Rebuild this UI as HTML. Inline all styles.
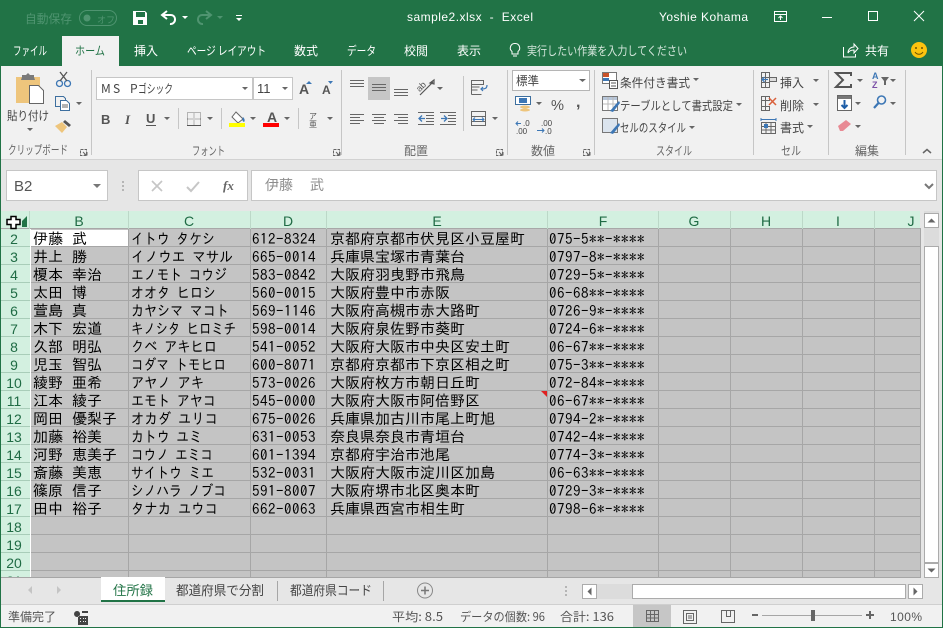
<!DOCTYPE html>
<html lang="ja"><head><meta charset="utf-8"><title>sample2.xlsx - Excel</title>
<style>
html,body{margin:0;padding:0;background:#e6e6e6;width:943px;height:628px;overflow:hidden}
svg{display:block;position:absolute;left:0;top:0}
text{font-family:"Liberation Sans","Noto Sans CJK JP",sans-serif;font-size:12px;white-space:pre}
.w{fill:#fff}.g{fill:#5f5f5f}.d{fill:#444}
.j{font-family:"Noto Sans CJK JP",sans-serif}
.c{font-family:"IPAGothic","Liberation Sans",sans-serif;font-size:15px;fill:#000}
.n{letter-spacing:.5px}
.h{font-family:"Liberation Sans",sans-serif;font-size:14px;fill:#1f6b44;text-anchor:middle}
.r{font-family:"Liberation Sans",sans-serif;font-size:14px;fill:#1f6b44;text-anchor:middle}
.s{fill:none;stroke:#666;stroke-width:1}
</style></head><body>
<svg width="943" height="628" viewBox="0 0 943 628" xmlns="http://www.w3.org/2000/svg">
<!-- backgrounds -->
<rect width="943" height="628" fill="#e6e6e6"/>
<rect width="943" height="66" fill="#217346"/>
<rect x="62" y="36" width="57" height="30" fill="#f1f1f1"/>
<rect y="66" width="943" height="93" fill="#f1f1f1"/>
<rect y="159" width="943" height="1" fill="#d2d2d2"/>
<!-- title bar -->
<text x="25" y="23" class="j" fill="#4f9470" textLength="47" lengthAdjust="spacingAndGlyphs">自動保存</text>
<rect x="79.500" y="10.500" width="37" height="15" rx="7.500" fill="none" stroke="#4f9470"/>
<circle cx="87" cy="18" r="3.500" fill="#4f9470"/>
<text x="97" y="23" class="j" fill="#4f9470" style="font-size:9px">オフ</text>
<path d="M133 11h12l2 2v12h-14z" fill="#fff"/><path d="M136 12h9v5h-9zM138 20h5v4h-5z" fill="#217346"/>
<path d="M167 11l-5 4 5 4M162 15h9a4 4 0 0 1 4 4 4.500 4.500 0 0 1-5 5" fill="none" stroke="#fff" stroke-width="2"/>
<path d="M182 16h6l-3 3z" fill="#fff"/>
<path d="M206 11l5 4-5 4M211 15h-9a4 4 0 0 0-4 4 4.500 4.500 0 0 0 5 5" fill="none" stroke="#4f9470" stroke-width="2"/>
<path d="M217 16h6l-3 3z" fill="#4f9470"/>
<path d="M236 15h6v1h-6zM236 18h6l-3 3z" fill="#fff"/>
<text x="407" y="21" class="w" textLength="126">sample2.xlsx  -  Excel</text>
<text x="659" y="21" class="w" textLength="89">Yoshie Kohama</text>
<path d="M774.500 11.500h12v10h-12zM774.500 14.500h12M780.500 20v-4M778.500 18l2-2 2 2" fill="none" stroke="#fff"/>
<path d="M822 17h10v1h-10z" fill="#fff"/>
<rect x="868.500" y="11.500" width="9" height="9" fill="none" stroke="#fff"/>
<path d="M914 11l10 10M924 11l-10 10" stroke="#fff" fill="none"/>
<!-- tabs -->
<g class="j">
<text x="13" y="55" class="w j" textLength="34" lengthAdjust="spacingAndGlyphs">ファイル</text>
<text x="75" y="55" class="j" fill="#217346" textLength="30" lengthAdjust="spacingAndGlyphs">ホーム</text>
<text x="134" y="55" class="w j" textLength="24" lengthAdjust="spacingAndGlyphs">挿入</text>
<text x="187" y="55" class="w j" textLength="79" lengthAdjust="spacingAndGlyphs">ページ レイアウト</text>
<text x="294" y="55" class="w j" textLength="24" lengthAdjust="spacingAndGlyphs">数式</text>
<text x="347" y="55" class="w j" textLength="29" lengthAdjust="spacingAndGlyphs">データ</text>
<text x="404" y="55" class="w j" textLength="24" lengthAdjust="spacingAndGlyphs">校閲</text>
<text x="457" y="55" class="w j" textLength="24" lengthAdjust="spacingAndGlyphs">表示</text>
<text x="527" y="55" class="j" fill="#d6e7dd" textLength="160" lengthAdjust="spacingAndGlyphs">実行したい作業を入力してください</text>
<text x="865" y="55" class="w j" textLength="24" lengthAdjust="spacingAndGlyphs">共有</text>
</g>
<path d="M515 43.500a4.500 4.500 0 0 1 3 8v2.500h-6v-2.500a4.500 4.500 0 0 1 3-8zM513 56h4" fill="none" stroke="#fff"/>
<path d="M843.500 47v10h12v-3M848 53c0-4 3-6 6-6v-3l4 4.500-4 4.500v-3c-3 0-5 1-6 3z" fill="none" stroke="#fff"/>
<circle cx="919" cy="50" r="8" fill="#fcc30f"/><circle cx="916" cy="48" r="1" fill="#6b5200"/><circle cx="922" cy="48" r="1" fill="#6b5200"/><path d="M915 52c2 3 6 3 8 0" fill="none" stroke="#6b5200"/>
<!-- ribbon separators -->
<path d="M91.500 70v85M341.500 70v85M507.500 70v85M594.500 70v85M753.500 70v85M828.500 70v85M905.500 70v85" stroke="#c6c6c6" fill="none"/>
<path d="M178.500 108v21M221.500 108v21M298.500 108v21M463.500 76v55" stroke="#c6c6c6" fill="none"/>
<!-- carets -->
<path fill="#666" d="M27 128h6l-3 3zM76 102h6l-3 3zM164 117h6l-3 3zM207 117h6l-3 3zM250 117h6l-3 3zM284 117h6l-3 3zM327 117h6l-3 3zM437 87h6l-3 3zM492 117h6l-3 3zM536 102h6l-3 3zM693 78h6l-3 3zM736 103h6l-3 3zM689 126h6l-3 3zM813 79h6l-3 3zM813 103h6l-3 3zM807 125h6l-3 3zM857 79h6l-3 3zM890 79h6l-3 3zM855 102h6l-3 3zM890 102h6l-3 3zM855 125h6l-3 3z"/>
<!-- clipboard -->
<path d="M16 77h24v26H16z" fill="#eec57c"/><path d="M22 77v-2h4l2-2 2 2h4v2l1 3H21z" fill="#7a7a7a"/>
<path d="M29.500 85.500h9l5 5v13h-14z" fill="#fff" stroke="#666"/>
<text x="7" y="120" class="j" fill="#444" textLength="42" lengthAdjust="spacingAndGlyphs">貼り付け</text>
<circle cx="59.500" cy="83.500" r="3" fill="none" stroke="#3d77b5" stroke-width="1.300"/><circle cx="67.500" cy="83.500" r="3" fill="none" stroke="#3d77b5" stroke-width="1.300"/><path d="M60 81l7-9M67 81l-7-9" stroke="#555" stroke-width="1.300" fill="none"/>
<path d="M55.500 96.500h8l2 2v8h-10z" fill="#f1f1f1" stroke="#3d6f9f"/><path d="M60.500 100.500h6l3 3v7h-9z" fill="#fff" stroke="#3d6f9f"/><path d="M62 105h6M62 107h6" stroke="#666"/>
<path d="M65 120l6 5-2 2-6-5z" fill="#555"/><path d="M62 122l5 5-5 6-7-7z" fill="#eec57c"/>
<text x="8" y="154" class="j" fill="#666" textLength="60" lengthAdjust="spacingAndGlyphs">クリップボード</text>
<path d="M80.500 149.500h6v6h-6z" class="s" stroke-dasharray="3 1"/><path d="M83 152l3 3M84 155h3v-3" stroke="#666" fill="none"/>
<path d="M333.500 149.500h6v6h-6z" class="s" stroke-dasharray="3 1"/><path d="M336 152l3 3M337 155h3v-3" stroke="#666" fill="none"/>
<path d="M496.500 149.500h6v6h-6z" class="s" stroke-dasharray="3 1"/><path d="M499 152l3 3M500 155h3v-3" stroke="#666" fill="none"/>
<path d="M583.500 149.500h6v6h-6z" class="s" stroke-dasharray="3 1"/><path d="M586 152l3 3M587 155h3v-3" stroke="#666" fill="none"/>
<!-- font -->
<rect x="96.500" y="77.500" width="156" height="22" fill="#fff" stroke="#c6c6c6"/>
<rect x="253.500" y="77.500" width="39" height="22" fill="#fff" stroke="#c6c6c6"/>
<path fill="#666" d="M242 87h6l-3 3zM282 87h6l-3 3z"/>
<text y="93" class="j" fill="#444"><tspan x="101">M</tspan><tspan x="113">S</tspan><tspan x="130">P</tspan><tspan x="138" textLength="35" lengthAdjust="spacingAndGlyphs">ゴシック</tspan></text>
<text x="257" y="93" fill="#444" style="font-size:13px">11</text>
<text x="299" y="94" fill="#555" style="font-size:14px;font-weight:bold">A</text><path d="M306 84l3-3 3 3z" fill="#3d77b5"/>
<text x="322" y="94" fill="#555" style="font-size:12px;font-weight:bold">A</text><path d="M328 81h5l-2.500 3z" fill="#3d77b5"/>
<text x="101" y="124" fill="#555" style="font-size:13px;font-weight:bold">B</text>
<text x="125" y="124" fill="#555" style="font-size:13px;font-style:italic;font-family:'Liberation Serif',serif;font-weight:bold">I</text>
<text x="146" y="123" fill="#555" style="font-size:13px;font-weight:bold">U</text><path d="M146 125.500h10" stroke="#555"/>
<path d="M187.500 112.500h13v13h-13zM187.500 119h13M194 112.500v13" fill="none" stroke="#777" stroke-dasharray="1 1"/><path d="M187 125.500h14" stroke="#555"/>
<path d="M236 112l7 7-5 4-6-6z" fill="#fff" stroke="#666"/><path d="M243 117c2 2 2 4 1 5-2-1-2-3-1-5z" fill="#3d77b5"/>
<rect x="229" y="123" width="16" height="4" fill="#ff0"/>
<text x="267" y="122" fill="#555" style="font-size:14px;font-weight:bold">A</text>
<rect x="263" y="123" width="16" height="4" fill="#f00"/>
<text x="309" y="119" class="j" fill="#555" style="font-size:8px">ア</text><text x="309" y="127" class="j" fill="#555" style="font-size:8px">亜</text>
<text x="192" y="155" class="j" fill="#666" textLength="33" lengthAdjust="spacingAndGlyphs">フォント</text>
<!-- align -->
<rect x="368" y="77" width="22" height="23" fill="#c6c6c6"/>
<path class="s" d="M350 80.500h14M350 83.500h14M350 86.500h14M372 84.500h14M372 87.500h14M372 90.500h14M394 89.500h14M394 92.500h14M394 95.500h14"/>
<path class="s" d="M350 114.500h14M350 117.500h10M350 120.500h14M350 123.500h10M372 114.500h14M374 117.500h10M372 120.500h14M374 123.500h10M394 114.500h14M398 117.500h10M394 120.500h14M398 123.500h10"/>
<path class="s" d="M418 112.500h16M426 115.500h8M426 118.500h8M426 121.500h8M418 124.500h16M440 112.500h16M448 115.500h8M448 118.500h8M448 121.500h8M440 124.500h16"/>
<path d="M425 118.500h-6m3-3l-3 3 3 3" fill="none" stroke="#3d77b5" stroke-width="1.300"/><path d="M441 118.500h6m-3-3l3 3-3 3" fill="none" stroke="#3d77b5" stroke-width="1.300"/>
<path d="M420 95l13-13M430 83l4-3v4z" fill="none" stroke="#555" stroke-width="1.200"/>
<text x="417" y="90" fill="#555" transform="rotate(-45 421 88)" style="font-size:9px">ab</text>
<path class="s" d="M471.500 80.500h12v4h-12zM471.500 87h8M471.500 90h6M471.500 94.500h10"/><path d="M471.500 80.500v14" stroke="#666"/>
<path d="M487 85c0 3-1 4-6 4m2-2l-2 2 2 2" fill="none" stroke="#3d77b5" stroke-width="1.200"/>
<path class="s" d="M471.500 111.500h14v14h-14zM471.500 116.500h14M471.500 121.500h14"/><rect x="472" y="117" width="13" height="4" fill="#f1f1f1"/><path d="M473 119.500h11M475 117.500l-2 2 2 2M482 117.500l2 2-2 2" fill="none" stroke="#3d77b5"/>
<text x="404" y="155" class="j" fill="#666" textLength="24" lengthAdjust="spacingAndGlyphs">配置</text>
<!-- number -->
<rect x="512.500" y="70.500" width="77" height="20" fill="#fff" stroke="#b5b5b5"/>
<path fill="#666" d="M579 79h7l-3.500 3z"/>
<text x="516" y="85" class="j" fill="#444" textLength="23" lengthAdjust="spacingAndGlyphs">標準</text>
<rect x="515.500" y="96.500" width="15" height="8" fill="#fff" stroke="#3d6f9f"/><rect x="519" y="98" width="8" height="5" fill="#3d77b5"/>
<ellipse cx="525" cy="107" rx="5" ry="1.500" fill="#eec57c"/><ellipse cx="525" cy="110" rx="5" ry="1.500" fill="#eec57c"/>
<text x="551" y="110" fill="#555" style="font-size:15px" textLength="13" lengthAdjust="spacingAndGlyphs">%</text>
<text x="576" y="107" fill="#555" style="font-size:16px;font-weight:bold">,</text>
<text x="523" y="126" fill="#444" style="font-size:8px">.0</text><text x="516" y="134" fill="#444" style="font-size:8px">.00</text><path d="M521 123.500h-5m2-2l-2 2 2 2" fill="none" stroke="#3d77b5"/>
<text x="541" y="126" fill="#444" style="font-size:8px">.00</text><text x="545" y="134" fill="#444" style="font-size:8px">.0</text><path d="M537 130.500h7m-2-2l2 2-2 2" fill="none" stroke="#3d77b5"/>
<text x="531" y="155" class="j" fill="#666" textLength="24" lengthAdjust="spacingAndGlyphs">数値</text>
<!-- styles -->
<rect x="602.500" y="72.500" width="14" height="11" fill="#fff" stroke="#777"/><rect x="603" y="73" width="6" height="4" fill="#c9532a"/><rect x="603" y="78" width="6" height="3" fill="#3d77b5"/><rect x="609.500" y="80.500" width="8" height="8" fill="#fff" stroke="#555"/><path d="M611 83h5M611 86h5" stroke="#555"/>
<text x="620" y="87" class="j" fill="#444" textLength="70" lengthAdjust="spacingAndGlyphs">条件付き書式</text>
<rect x="602.500" y="96.500" width="15" height="14" fill="#fff" stroke="#777"/><rect x="603" y="97" width="14" height="3" fill="#b7c6d9"/><path d="M608 97v13M613 97v13M603 104h14" stroke="#bbb"/><path d="M610 111l6-7 3-3 1 2-7 9z" fill="#3d77b5"/>
<text x="620" y="110" class="j" fill="#444" textLength="113" lengthAdjust="spacingAndGlyphs">テーブルとして書式設定</text>
<rect x="602.500" y="118.500" width="15" height="14" fill="#dbe4ee" stroke="#777"/><path d="M610 133l6-7 3-3 1 2-7 9z" fill="#3d77b5"/>
<text x="620" y="132" class="j" fill="#444" textLength="66" lengthAdjust="spacingAndGlyphs">セルのスタイル</text>
<text x="656" y="155" class="j" fill="#666" textLength="36" lengthAdjust="spacingAndGlyphs">スタイル</text>
<!-- cells -->
<path class="s" d="M761.500 72.500h8v5h-8zM761.500 82.500h8v5h-8zM765.500 72.500v15M761.500 77.500v5M769.500 77.500v5"/><rect x="769.500" y="77.500" width="7" height="4" fill="#ddd" stroke="#666"/><path d="M768 79.500h-6m2.500-2.500l-2.500 2.500 2.500 2.500" fill="none" stroke="#3d77b5" stroke-width="1.200"/>
<text x="780" y="87" class="j" fill="#444" textLength="24" lengthAdjust="spacingAndGlyphs">挿入</text>
<path class="s" d="M761.500 96.500h8v4h-8zM761.500 106.500h8v4h-8zM765.500 96.500v14M761.500 100.500v6"/><path d="M769 98l7 7M776 98l-7 7" stroke="#d9603b" stroke-width="1.500" fill="none"/>
<text x="780" y="110" class="j" fill="#444" textLength="24" lengthAdjust="spacingAndGlyphs">削除</text>
<path class="s" d="M761.500 122.500h14v11h-14zM761.500 126.500h14M761.500 130h14M766 122.500v11M771 122.500v11"/><rect x="764" y="124" width="4" height="4" fill="#3d77b5"/><path d="M761 119.500h15M761 118v3M776 118v3" stroke="#3d77b5" fill="none"/>
<text x="780" y="132" class="j" fill="#444" textLength="24" lengthAdjust="spacingAndGlyphs">書式</text>
<text x="781" y="155" class="j" fill="#666" textLength="20" lengthAdjust="spacingAndGlyphs">セル</text>
<!-- edit -->
<path d="M851 76v-3h-15l7 7-7 7h15v-3" fill="none" stroke="#555" stroke-width="2"/>
<text x="872" y="79" fill="#3d77b5" style="font-size:9px;font-weight:bold">A</text><text x="872" y="88" fill="#7b4fa6" style="font-size:9px;font-weight:bold">Z</text><path d="M881 77h8l-3 4v4h-2v-4z" fill="#666"/>
<rect x="837.500" y="95.500" width="14" height="15" fill="#fff" stroke="#666"/><rect x="838" y="96" width="13" height="3" fill="#777"/><path d="M844.500 100v8m-3-3l3 3 3-3" fill="none" stroke="#1f5fa8" stroke-width="2"/>
<circle cx="881.500" cy="100" r="4" fill="none" stroke="#3d77b5" stroke-width="1.600"/><path d="M878.500 103l-4.500 5" stroke="#3d77b5" stroke-width="2.200"/>
<path d="M838 126l8-6 5 4-8 7h-3z" fill="#e88a94"/>
<text x="855" y="155" class="j" fill="#666" textLength="24" lengthAdjust="spacingAndGlyphs">編集</text>
<path d="M923 153l4-3.500 4 3.500" fill="none" stroke="#666" stroke-width="1.500"/>
<!-- formula bar -->
<rect x="6.500" y="170.500" width="101" height="30" fill="#fff" stroke="#c6c6c6"/>
<text x="14" y="191" fill="#555" style="font-size:15px">B2</text>
<path fill="#777" d="M93 184h8l-4 4z"/>
<path d="M122 181h2v2h-2zM122 185h2v2h-2zM122 189h2v2h-2z" fill="#b5b5b5"/>
<rect x="138.500" y="170.500" width="109" height="30" fill="#fff" stroke="#c6c6c6"/>
<path d="M152 181l10 10M162 181l-10 10" stroke="#c6c6c6" stroke-width="1.700" fill="none"/>
<path d="M187 187l4 4 8-9" stroke="#c6c6c6" stroke-width="2" fill="none"/>
<text x="223" y="190" fill="#666" style="font-family:'Liberation Serif',serif;font-size:13px;font-style:italic;font-weight:bold">fx</text>
<rect x="251.500" y="170.500" width="685" height="30" fill="#fff" stroke="#c6c6c6"/>
<text x="265" y="190" class="j" fill="#8d8d8d" style="font-size:14px">伊藤</text><text x="310" y="190" class="j" fill="#8d8d8d" style="font-size:14px">武</text>
<path d="M925 184l4 4 4-4" fill="none" stroke="#777" stroke-width="2"/>
<!-- headers -->
<rect x="1" y="211" width="919" height="18" fill="#d3f0e0"/>
<rect x="1" y="229" width="29" height="348" fill="#d3f0e0"/>
<rect x="0" y="228" width="921" height="1" fill="#a8a8a8"/>
<rect x="30" y="229" width="890" height="348" fill="#c4c4c4"/>
<rect x="30" y="229" width="1" height="348" fill="#fff"/>
<rect x="31" y="230" width="97" height="16" fill="#fff"/>
<path d="M128.500 211v18M250.500 211v18M326.500 211v18M547.500 211v18M658.500 211v18M730.500 211v18M802.500 211v18M874.500 211v18M29.500 211v18" stroke="#bcd8c8" fill="none"/>
<path d="M1 246.500h29M1 264.500h29M1 282.500h29M1 300.500h29M1 318.500h29M1 336.500h29M1 354.500h29M1 372.500h29M1 390.500h29M1 408.500h29M1 426.500h29M1 444.500h29M1 462.500h29M1 480.500h29M1 498.500h29M1 516.500h29M1 534.500h29M1 552.500h29M1 570.500h29" stroke="#a9cdb9" fill="none"/>
<!-- grid lines -->
<path stroke="#a6a6a6" fill="none" d="M31 246.500H920M31 264.500H920M31 282.500H920M31 300.500H920M31 318.500H920M31 336.500H920M31 354.500H920M31 372.500H920M31 390.500H920M31 408.500H920M31 426.500H920M31 444.500H920M31 462.500H920M31 480.500H920M31 498.500H920M31 516.500H920M31 534.500H920M31 552.500H920M31 570.500H920M128.500 229V577M250.500 229V577M326.500 229V577M547.500 229V577M658.500 229V577M730.500 229V577M802.500 229V577M874.500 229V577M920.500 229V577"/>
<!-- column labels -->
<text x="79" y="226" class="h">B</text><text x="189" y="226" class="h">C</text><text x="288" y="226" class="h">D</text><text x="437" y="226" class="h">E</text><text x="603" y="226" class="h">F</text><text x="694" y="226" class="h">G</text><text x="766" y="226" class="h">H</text><text x="838" y="226" class="h">I</text><text x="911" y="226" class="h">J</text>
<!-- corner -->
<path d="M22 221l5-5v11h-5z" fill="#217346"/>
<path d="M11 216.500h5v3h4v5h-4v4h-5v-4H7v-5h4z" fill="#fff" stroke="#000" stroke-width="1.500"/>
<!-- row labels -->
<text x="14" y="244" class="r">2</text><text x="14" y="262" class="r">3</text><text x="14" y="280" class="r">4</text><text x="14" y="298" class="r">5</text><text x="14" y="316" class="r">6</text><text x="14" y="334" class="r">7</text><text x="14" y="352" class="r">8</text><text x="14" y="370" class="r">9</text><text x="14" y="388" class="r">10</text><text x="14" y="406" class="r">11</text><text x="14" y="424" class="r">12</text><text x="14" y="442" class="r">13</text><text x="14" y="460" class="r">14</text><text x="14" y="478" class="r">15</text><text x="14" y="496" class="r">16</text><text x="14" y="514" class="r">17</text><text x="14" y="532" class="r">18</text><text x="14" y="550" class="r">19</text><text x="14" y="568" class="r">20</text><text x="14" y="586" class="r">21</text>
<!-- cell data -->
<g>
<text class="c" y="244"><tspan x="33">伊藤</tspan><tspan x="72">武</tspan></text><text class="c" x="131" y="244" textLength="84" lengthAdjust="spacingAndGlyphs">イトウ タケシ</text><text class="c n" x="252" y="244">612-8324</text><text class="c" x="330" y="244">京都府京都市伏見区小豆屋町</text><text class="c n" x="549" y="244">075-5**-****</text>
<text class="c" y="262"><tspan x="33">井上</tspan><tspan x="72">勝</tspan></text><text class="c" x="131" y="262" textLength="102" lengthAdjust="spacingAndGlyphs">イノウエ マサル</text><text class="c n" x="252" y="262">665-0014</text><text class="c" x="330" y="262">兵庫県宝塚市青葉台</text><text class="c n" x="549" y="262">0797-8*-****</text>
<text class="c" y="280"><tspan x="33">榎本</tspan><tspan x="72">幸治</tspan></text><text class="c" x="131" y="280" textLength="96" lengthAdjust="spacingAndGlyphs">エノモト コウジ</text><text class="c n" x="252" y="280">583-0842</text><text class="c" x="330" y="280">大阪府羽曳野市飛鳥</text><text class="c n" x="549" y="280">0729-5*-****</text>
<text class="c" y="298"><tspan x="33">太田</tspan><tspan x="72">博</tspan></text><text class="c" x="131" y="298" textLength="85" lengthAdjust="spacingAndGlyphs">オオタ ヒロシ</text><text class="c n" x="252" y="298">560-0015</text><text class="c" x="330" y="298">大阪府豊中市赤阪</text><text class="c n" x="549" y="298">06-68**-****</text>
<text class="c" y="316"><tspan x="33">萱島</tspan><tspan x="72">真</tspan></text><text class="c" x="131" y="316" textLength="98" lengthAdjust="spacingAndGlyphs">カヤシマ マコト</text><text class="c n" x="252" y="316">569-1146</text><text class="c" x="330" y="316">大阪府高槻市赤大路町</text><text class="c n" x="549" y="316">0726-9*-****</text>
<text class="c" y="334"><tspan x="33">木下</tspan><tspan x="72">宏道</tspan></text><text class="c" x="131" y="334" textLength="105" lengthAdjust="spacingAndGlyphs">キノシタ ヒロミチ</text><text class="c n" x="252" y="334">598-0014</text><text class="c" x="330" y="334">大阪府泉佐野市葵町</text><text class="c n" x="549" y="334">0724-6*-****</text>
<text class="c" y="352"><tspan x="33">久部</tspan><tspan x="72">明弘</tspan></text><text class="c" x="131" y="352" textLength="86" lengthAdjust="spacingAndGlyphs">クベ アキヒロ</text><text class="c n" x="252" y="352">541-0052</text><text class="c" x="330" y="352">大阪府大阪市中央区安土町</text><text class="c n" x="549" y="352">06-67**-****</text>
<text class="c" y="370"><tspan x="33">児玉</tspan><tspan x="72">智弘</tspan></text><text class="c" x="131" y="370" textLength="95" lengthAdjust="spacingAndGlyphs">コダマ トモヒロ</text><text class="c n" x="252" y="370">600-8071</text><text class="c" x="330" y="370">京都府京都市下京区相之町</text><text class="c n" x="549" y="370">075-3**-****</text>
<text class="c" y="388"><tspan x="33">綾野</tspan><tspan x="72">亜希</tspan></text><text class="c" x="131" y="388" textLength="73" lengthAdjust="spacingAndGlyphs">アヤノ アキ</text><text class="c n" x="252" y="388">573-0026</text><text class="c" x="330" y="388">大阪府枚方市朝日丘町</text><text class="c n" x="549" y="388">072-84*-****</text>
<text class="c" y="406"><tspan x="33">江本</tspan><tspan x="72">綾子</tspan></text><text class="c" x="131" y="406" textLength="85" lengthAdjust="spacingAndGlyphs">エモト アヤコ</text><text class="c n" x="252" y="406">545-0000</text><text class="c" x="330" y="406">大阪府大阪市阿倍野区</text><text class="c n" x="549" y="406">06-67**-****</text>
<text class="c" y="424"><tspan x="33">岡田</tspan><tspan x="72">優梨子</tspan></text><text class="c" x="131" y="424" textLength="87" lengthAdjust="spacingAndGlyphs">オカダ ユリコ</text><text class="c n" x="252" y="424">675-0026</text><text class="c" x="330" y="424">兵庫県加古川市尾上町旭</text><text class="c n" x="549" y="424">0794-2*-****</text>
<text class="c" y="442"><tspan x="33">加藤</tspan><tspan x="72">裕美</tspan></text><text class="c" x="131" y="442" textLength="71" lengthAdjust="spacingAndGlyphs">カトウ ユミ</text><text class="c n" x="252" y="442">631-0053</text><text class="c" x="330" y="442">奈良県奈良市青垣台</text><text class="c n" x="549" y="442">0742-4*-****</text>
<text class="c" y="460"><tspan x="33">河野</tspan><tspan x="72">恵美子</tspan></text><text class="c" x="131" y="460" textLength="82" lengthAdjust="spacingAndGlyphs">コウノ エミコ</text><text class="c n" x="252" y="460">601-1394</text><text class="c" x="330" y="460">京都府宇治市池尾</text><text class="c n" x="549" y="460">0774-3*-****</text>
<text class="c" y="478"><tspan x="33">斎藤</tspan><tspan x="72">美恵</tspan></text><text class="c" x="131" y="478" textLength="83" lengthAdjust="spacingAndGlyphs">サイトウ ミエ</text><text class="c n" x="252" y="478">532-0031</text><text class="c" x="330" y="478">大阪府大阪市淀川区加島</text><text class="c n" x="549" y="478">06-63**-****</text>
<text class="c" y="496"><tspan x="33">篠原</tspan><tspan x="72">信子</tspan></text><text class="c" x="131" y="496" textLength="95" lengthAdjust="spacingAndGlyphs">シノハラ ノブコ</text><text class="c n" x="252" y="496">591-8007</text><text class="c" x="330" y="496">大阪府堺市北区奥本町</text><text class="c n" x="549" y="496">0729-3*-****</text>
<text class="c" y="514"><tspan x="33">田中</tspan><tspan x="72">裕子</tspan></text><text class="c" x="131" y="514" textLength="87" lengthAdjust="spacingAndGlyphs">タナカ ユウコ</text><text class="c n" x="252" y="514">662-0063</text><text class="c" x="330" y="514">兵庫県西宮市相生町</text><text class="c n" x="549" y="514">0798-6*-****</text>
</g>
<path d="M541 391h6v6z" fill="#e02020"/>
<!-- lower chrome background covers clipped row 21 -->
<rect x="0" y="577" width="943" height="28" fill="#e6e6e6"/>
<rect x="0" y="577" width="921" height="1" fill="#a6a6a6"/>
<!-- vertical scrollbar -->
<rect x="924" y="211" width="15" height="366" fill="#dcdcdc"/>
<rect x="924.500" y="213.500" width="14" height="14" fill="#fff" stroke="#ababab"/><path d="M927.500 222.500l4-4 4 4z" fill="#666"/>
<rect x="924.500" y="246.500" width="14" height="316" fill="#fff" stroke="#ababab"/>
<rect x="924.500" y="563.500" width="14" height="14" fill="#fff" stroke="#ababab"/><path d="M927.500 568.500l4 4 4-4z" fill="#666"/>
<!-- sheet tabs -->
<rect x="101" y="577" width="64" height="24" fill="#fff"/><rect x="101" y="600" width="64" height="2" fill="#217346"/>
<path d="M32 586v8l-4-4zM57 586v8l4-4z" fill="#c4c4c4"/>
<text x="113" y="595" class="j" fill="#217346" style="font-size:13px" textLength="40" lengthAdjust="spacingAndGlyphs">住所録</text>
<text x="176" y="595" class="j" fill="#444" style="font-size:13px" textLength="88" lengthAdjust="spacingAndGlyphs">都道府県で分割</text>
<text x="290" y="595" class="j" fill="#444" style="font-size:13px" textLength="82" lengthAdjust="spacingAndGlyphs">都道府県コード</text>
<path d="M277.500 581v20M383.500 581v20" stroke="#a6a6a6"/>
<circle cx="425" cy="590.500" r="7.500" fill="none" stroke="#888"/><path d="M421 590.500h8M425 586.500v8" stroke="#777" stroke-width="1.500"/>
<path d="M565 586h2v2h-2zM565 590h2v2h-2zM565 594h2v2h-2z" fill="#b5b5b5"/>
<!-- h scrollbar -->
<rect x="582" y="584" width="340" height="15" fill="#dcdcdc"/>
<rect x="582.500" y="584.500" width="14" height="14" fill="#fff" stroke="#ababab"/><path d="M591.500 587.500v8l-4-4z" fill="#666"/>
<rect x="632.500" y="584.500" width="273" height="14" fill="#fff" stroke="#ababab"/>
<rect x="908.500" y="584.500" width="14" height="14" fill="#fff" stroke="#ababab"/><path d="M913.500 587.500v8l4-4z" fill="#666"/>
<!-- status bar -->
<rect x="1" y="605" width="941" height="22" fill="#f1f1f1"/>
<rect x="0" y="604" width="943" height="1" fill="#cfcfcf"/>
<rect x="633" y="605" width="38" height="22" fill="#c6c6c6"/>
<text x="8" y="621" class="j" fill="#555" textLength="48" lengthAdjust="spacingAndGlyphs">準備完了</text>
<path d="M77 611a3 3 0 1 0 .1 0zM82 611h6v2h-6zM78 616h10v9H78z" fill="#444"/><path d="M80 618h1v1h-1zM83 618h1v1h-1zM85 618h1v1h-1zM80 621h1v1h-1zM83 621h1v1h-1zM85 621h1v1h-1z" fill="#f1f1f1"/>
<text x="392" y="621" class="j" fill="#555" textLength="51" lengthAdjust="spacingAndGlyphs">平均: 8.5</text>
<text x="460" y="621" class="j" fill="#555" textLength="85" lengthAdjust="spacingAndGlyphs">データの個数: 96</text>
<text x="560" y="621" class="j" fill="#555" textLength="54" lengthAdjust="spacingAndGlyphs">合計: 136</text>
<path class="s" d="M646.500 610.500h12v11h-12zM650.500 610.500v11M654.500 610.500v11M646.500 614.500h12M646.500 618h12"/>
<path class="s" d="M683.500 610.500h13v13h-13zM686.500 613.500h7v7h-7zM688 616h4M688 618h4"/>
<path class="s" d="M721.500 610.500h13v12h-13zM726.500 610.500v6h4v-6"/>
<path d="M752 614h6v2h-6zM866 614h8v2h-8zM869 611h2v8h-2z" fill="#666"/>
<path d="M762 615.500h100" stroke="#a6a6a6"/>
<rect x="811" y="610" width="4" height="11" fill="#666"/>
<text x="890" y="621" fill="#555" style="font-size:12px" textLength="32">100%</text>
<!-- window frame -->
<rect x="0" y="66" width="1" height="562" fill="#217346"/>
<rect x="942" y="66" width="1" height="562" fill="#217346"/>
<rect x="0" y="627" width="943" height="1" fill="#217346"/>
</svg>
</body></html>
